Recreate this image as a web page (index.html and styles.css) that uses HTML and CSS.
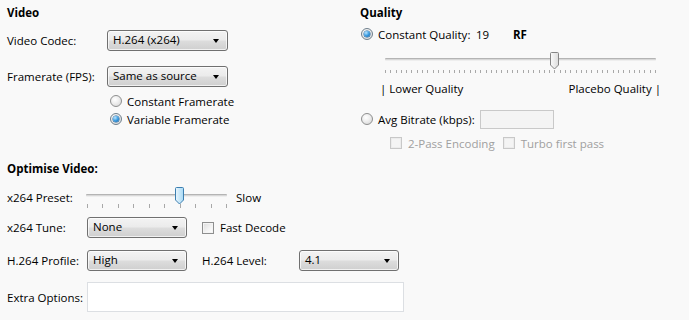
FILE: index.html
```html
<!DOCTYPE html>
<html>
<head>
<meta charset="utf-8">
<link rel="stylesheet" href="styles.css">
</head>
<body>
<div class="page">
  <div class="top">
    <section class="col video">
      <div class="title">Video</div>
      <div class="row combo-row codec">
        <span class="label lw100">Video Codec:</span>
        <div class="combo w120"><span>H.264 (x264)</span><i class="arrow"></i></div>
      </div>
      <div class="row combo-row fps">
        <span class="label lw100">Framerate (FPS):</span>
        <div class="combo w120"><span>Same as source</span><i class="arrow"></i></div>
      </div>
      <div class="radios">
        <div class="opt"><span class="radio"></span><span>Constant Framerate</span></div>
        <div class="opt"><span class="radio checked"></span><span>Variable Framerate</span></div>
      </div>
    </section>
    <section class="col quality">
      <div class="title">Quality</div>
      <div class="opt cq"><span class="radio checked"></span><span class="cq-label">Constant Quality:</span><span class="cq-val">19</span><b>RF</b></div>
      <div class="slider qslider">
        <div class="track"></div>
        <div class="ticks qticks"></div>
        <svg class="thumb" style="left:164px" width="11" height="18" viewBox="0 0 11 18"><defs><linearGradient id="gq" x1="0" x2="1"><stop offset="0" stop-color="#fbfbfb"/><stop offset="1" stop-color="#dcdcdc"/></linearGradient></defs><path d="M1.5 1.5 Q1.5 0.5 2.5 0.5 H8.5 Q9.5 0.5 9.5 1.5 V13 L5.5 17 L1.5 13 Z" fill="url(#gq)" stroke="#858585"/></svg>
      </div>
      <div class="qlabels"><span>| Lower Quality</span><span>Placebo Quality |</span></div>
      <div class="opt bitrate"><span class="radio"></span><span class="br-label">Avg Bitrate (kbps):</span><div class="textbox disabled-box br-box"></div></div>
      <div class="checks">
        <div class="opt disabled"><span class="check dis"></span><span>2-Pass Encoding</span></div>
        <div class="opt disabled"><span class="check dis"></span><span>Turbo first pass</span></div>
      </div>
    </section>
  </div>
  <section class="optimise">
    <div class="title">Optimise Video:</div>
    <div class="row preset">
      <span class="label lw79">x264 Preset:</span>
      <div class="slider pslider">
        <div class="track"></div>
        <div class="ticks pticks"></div>
        <svg class="thumb" style="left:88px" width="11" height="18" viewBox="0 0 11 18"><defs><linearGradient id="gp" x1="0" x2="1"><stop offset="0" stop-color="#eaf6fd"/><stop offset="1" stop-color="#a7d9f5"/></linearGradient></defs><path d="M1.5 1.5 Q1.5 0.5 2.5 0.5 H8.5 Q9.5 0.5 9.5 1.5 V13 L5.5 17 L1.5 13 Z" fill="url(#gp)" stroke="#3c7fb1"/></svg>
      </div>
      <span class="slow">Slow</span>
    </div>
    <div class="row combo-row tune">
      <span class="label lw80">x264 Tune:</span>
      <div class="combo w100"><span>None</span><i class="arrow"></i></div>
      <div class="opt fast"><span class="check"></span><span>Fast Decode</span></div>
    </div>
    <div class="row combo-row profile">
      <span class="label lw80">H.264 Profile:</span>
      <div class="combo w100"><span>High</span><i class="arrow"></i></div>
      <span class="label lw97 level">H.264 Level:</span>
      <div class="combo w100"><span>4.1</span><i class="arrow"></i></div>
    </div>
    <div class="row extra">
      <span class="label lw80">Extra Options:</span>
      <div class="textbox extra-box"></div>
    </div>
  </section>
</div>
</body>
</html>
```

FILE: styles.css
```css
html, body {
  margin: 0;
  padding: 0;
  background: #f9f9f9;
}
body {
  font-family: "Open Sans", "Noto Sans", sans-serif;
  font-size: 11.5px;
  color: #000;
  width: 689px;
  height: 320px;
  overflow: hidden;
}
.page {
  display: flex;
  flex-direction: column;
}
.top {
  display: grid;
  grid-template-columns: 360px 1fr;
}
.title {
  font-weight: bold;
  height: 16px;
  line-height: 16px;
  margin-top: 5px;
}
.video {
  padding-left: 7px;
}
.row {
  display: flex;
  align-items: center;
}
.label {
  white-space: nowrap;
  flex: none;
}
.lw100 { width: 100px; }
.lw80 { width: 80px; }
.lw79 { width: 79px; }
.lw97 { width: 97px; }

.combo-row { height: 21px; }
.codec { margin-top: 9px; }
.fps { margin-top: 15px; }

.combo {
  position: relative;
  box-sizing: border-box;
  height: 21px;
  border: 1px solid #707070;
  border-radius: 3px;
  background: linear-gradient(#f3f3f3 0%, #ebebeb 48%, #dddddd 52%, #cfcfcf 100%);
  box-shadow: inset 0 0 0 1px rgba(255,255,255,0.7);
  padding-left: 5px;
  line-height: 18px;
  flex: none;
}
.w120 { width: 121px; }
.w100 { width: 100px; }
.arrow {
  position: absolute;
  right: 8px;
  top: 8px;
  width: 0;
  height: 0;
  border-left: 3.5px solid transparent;
  border-right: 3.5px solid transparent;
  border-top: 4px solid #000;
}

.opt {
  display: flex;
  align-items: center;
  height: 18px;
  white-space: nowrap;
}
.radios {
  margin-top: 5px;
  padding-left: 103px;
}
.radio {
  box-sizing: border-box;
  width: 12px;
  height: 12px;
  border-radius: 50%;
  border: 1px solid #8e8f8f;
  background: radial-gradient(circle at 40% 35%, #ffffff 0%, #f0f0f0 40%, #d2d2d2 100%);
  margin-right: 5px;
  flex: none;
  position: relative;
}
.radio.checked {
  border-color: #6e7f8c;
}
.radio.checked::after {
  content: "";
  position: absolute;
  left: 2px;
  top: 2px;
  width: 6px;
  height: 6px;
  border-radius: 50%;
  background: radial-gradient(circle at 35% 30%, #b8e4ff 0%, #3a9be0 50%, #0f5ea3 100%);
  box-shadow: 0 0 0 0.5px #1e5f94;
}

.check {
  box-sizing: border-box;
  width: 12px;
  height: 12px;
  border: 1px solid #8e8f8f;
  background: linear-gradient(135deg, #dcdcdc 0%, #f4f4f4 60%, #ffffff 100%);
  box-shadow: inset 0 0 0 1px #f4f4f4;
  margin-right: 6px;
  flex: none;
}
.check.dis {
  border-color: #c8c8c8;
  background: #f4f4f4;
  box-shadow: inset 0 0 0 1px #ececec;
}
.disabled { color: #a0a0a0; }

/* quality column */
.quality .opt.cq {
  margin-top: 4px;
  padding-left: 1px;
}
.cq-label { width: 98px; }
.cq-val { width: 37px; }
.quality b { font-weight: bold; }

.slider {
  position: relative;
  flex: none;
}
.track {
  position: absolute;
  left: 0;
  right: 0;
  height: 3px;
  background: linear-gradient(#b4b4b4 0 1px, #d8d8d8 1px 2px, #eeeeee 2px 3px);
  border-radius: 1px;
}
.ticks {
  position: absolute;
  left: 0;
  right: 0;
}
.thumb {
  position: absolute;
  top: 0;
}
.qslider {
  margin-top: 9px;
  margin-left: 25px;
  width: 271px;
  height: 22px;
}
.qslider .track { top: 6px; }
.qslider .ticks {
  top: 18px;
  height: 3px;
  background: repeating-linear-gradient(90deg, #a8a8a8 0 1px, transparent 1px 5.294px);
}
.qslider .thumb { top: 0; }

.qlabels {
  box-sizing: border-box;
  margin-top: 6px;
  width: 301px;
  padding-left: 20px;
  display: flex;
  justify-content: space-between;
  height: 18px;
  line-height: 18px;
}
.bitrate {
  margin-top: 11px;
  height: 20px;
  padding-left: 1px;
}
.br-label { width: 102px; }
.textbox {
  box-sizing: border-box;
  border: 1px solid #cfd3d8;
  background: #ffffff;
  flex: none;
}
.disabled-box {
  background: #f4f4f4;
  border-color: #c9c9c9;
}
.br-box {
  width: 74px;
  height: 19px;
}
.checks {
  display: flex;
  margin-top: 5px;
  padding-left: 30px;
  gap: 8px;
}

/* optimise */
.optimise {
  padding-left: 7px;
}
.optimise .title {
  margin-top: 9px;
}
.preset {
  margin-top: 9px;
  height: 24px;
  align-items: flex-start;
}
.preset .label { line-height: 24px; }
.pslider {
  width: 141px;
  height: 22px;
  margin-top: 1px;
}
.pslider .track { top: 7px; }
.pslider .ticks {
  top: 17px;
  left: 1px;
  height: 4px;
  background: repeating-linear-gradient(90deg, #a8a8a8 0 1px, transparent 1px 15.44px);
}
.slow {
  margin-left: 9px;
  line-height: 24px;
}
.tune { margin-top: 7px; }
.fast { margin-left: 15px; }
.profile { margin-top: 12px; }
.level { margin-left: 15px; }
.extra {
  margin-top: 11px;
  height: 30px;
}
.extra-box {
  width: 317px;
  height: 30px;
  border-color: #dcdfe3;
}
```
